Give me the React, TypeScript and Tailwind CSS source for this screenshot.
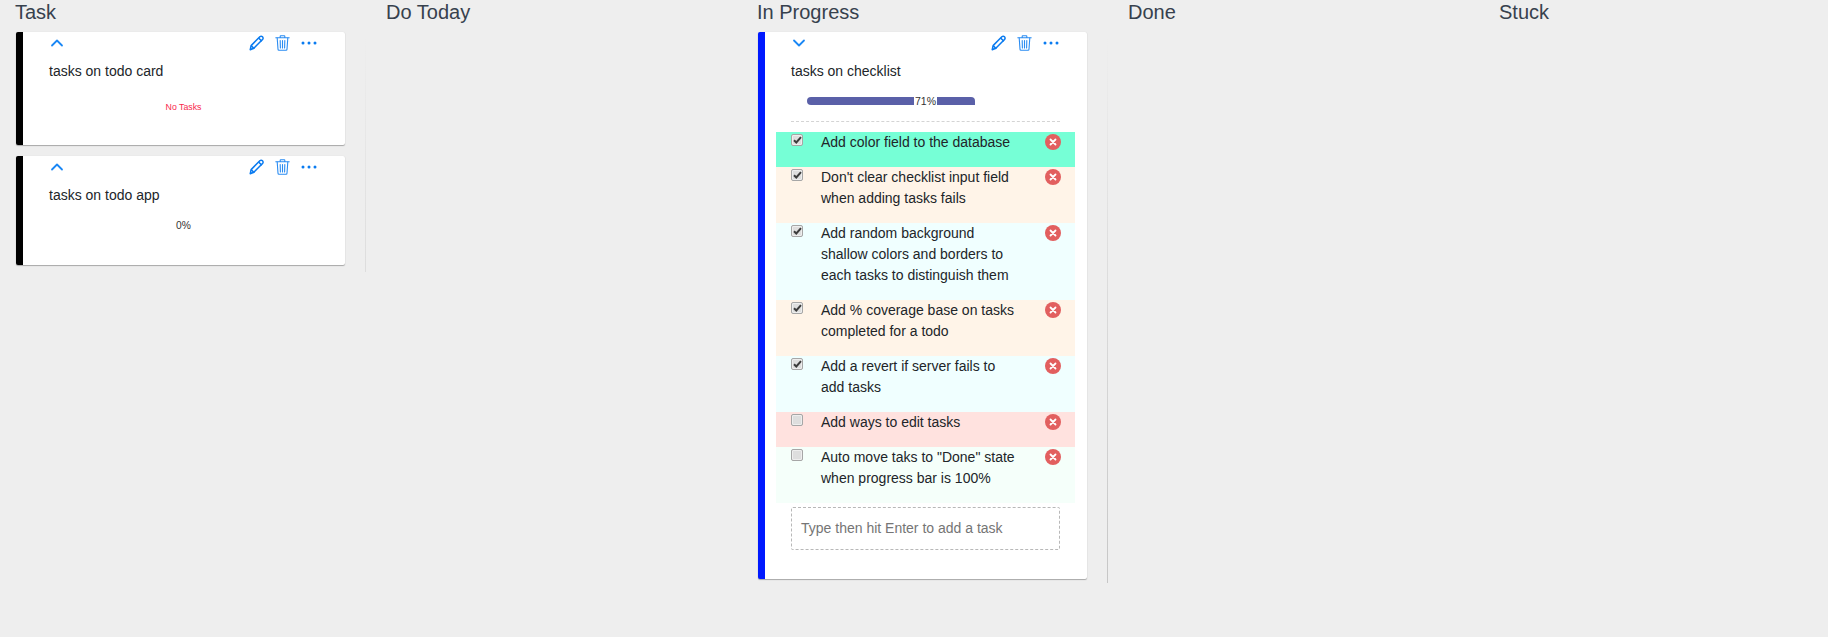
import type { ReactNode } from "react";

const Chevron = ({ down }: { down?: boolean }) => (
  <svg width="14" height="8" viewBox="0 0 14 8" fill="none" stroke="#1a87f5" strokeWidth="1.8" strokeLinecap="round" strokeLinejoin="round">
    <path d={down ? "M2 1.5l5 5 5-5" : "M2 6.5l5-5 5 5"} />
  </svg>
);

const Pencil = () => (
  <svg width="16" height="16" viewBox="0 0 16 16" fill="none" stroke="#0a7bf0" strokeWidth="1.5" strokeLinejoin="round">
    <path d="M1.2 14.8l.9-4.2 8.7-8.8c.8-.8 1.9-.8 2.7 0 .8.8.8 1.9 0 2.7l-8.7 8.8z" />
    <path d="M9.6 3l3.3 3.3M2.1 10.6l3.2 3.2" />
  </svg>
);

const Trash = () => (
  <svg width="15" height="16" viewBox="0 0 15 16" fill="none" stroke="#2a8cf2" strokeWidth="1.1" strokeLinecap="round">
    <path d="M.8 2.8h13.4M5.2 2.6V1.2c0-.3.2-.5.5-.5h3.6c.3 0 .5.2.5.5v1.4" />
    <path d="M2.2 3l.8 11.3c0 .6.5 1 1 1h7c.5 0 1-.4 1-1L12.800 3" />
    <path d="M5.2 5.500l.2 7.500M7.500 5.500V13M9.800 5.500l-.2 7.500" />
  </svg>
);

const Dots = () => (
  <svg width="16" height="4" viewBox="0 0 16 4" fill="#0a7bf0">
    <circle cx="2" cy="2" r="1.500" />
    <circle cx="8" cy="2" r="1.500" />
    <circle cx="14" cy="2" r="1.500" />
  </svg>
);

const CardHeader = ({ down }: { down?: boolean }) => (
  <div className="flex h-[22px] items-center justify-between pl-[27px] pr-[28px]">
    <Chevron down={down} />
    <div className="flex items-center">
      <Pencil />
      <span className="ml-[10px]">
        <Trash />
      </span>
      <span className="ml-[11px]">
        <Dots />
      </span>
    </div>
  </div>
);

const Checkbox = ({ checked }: { checked: boolean }) => (
  <span className="flex h-[12px] w-[12px] shrink-0 items-center justify-center rounded-[2px] border border-[#a6a6a6] bg-[#dedede] shadow-[inset_0_0_0_1px_#eeeeee]">
    {checked && (
      <svg width="9" height="8" viewBox="0 0 9 8" fill="none" stroke="#3c3c3c" strokeWidth="2">
        <path d="M1 4.200l2.300 2.300L8 1.200" />
      </svg>
    )}
  </span>
);

const tasks = [
  { text: ["Add color field to the database"], bg: "bg-[#76ffd6]", done: true },
  { text: ["Don't clear checklist input field", "when adding tasks fails"], bg: "bg-[#fff4e8]", done: true },
  { text: ["Add random background", "shallow colors and borders to", "each tasks to distinguish them"], bg: "bg-[#f0ffff]", done: true },
  { text: ["Add % coverage base on tasks", "completed for a todo"], bg: "bg-[#fff4e8]", done: true },
  { text: ["Add a revert if server fails to", "add tasks"], bg: "bg-[#f0ffff]", done: true },
  { text: ["Add ways to edit tasks"], bg: "bg-[#ffe2df]", done: false },
  { text: ['Auto move taks to "Done" state', "when progress bar is 100%"], bg: "bg-[#f5fffa]", done: false },
];

const TaskRow = ({ text, bg, done }: { text: string[]; bg: string; done: boolean }) => (
  <div className={`flex pb-[14px] pl-[15px] pr-[14px] ${bg}`}>
    <div className="w-[30px] pt-[2px]">
      <Checkbox checked={done} />
    </div>
    <div className="flex-1 text-[14px] leading-[21px] text-[#212529]">
      {text.map((line) => (
        <div key={line}>{line}</div>
      ))}
    </div>
    <div className="pt-[2px]">
      <span className="flex h-4 w-4 items-center justify-center rounded-full bg-[#e25f5f]">
        <svg width="8" height="8" viewBox="0 0 8 8" stroke="#fff" strokeWidth="1.800" strokeLinecap="round">
          <path d="M1.500 1.500l5 5M6.500 1.500l-5 5" />
        </svg>
      </span>
    </div>
  </div>
);

const Card = ({ color, height, children }: { color: string; height: string; children: ReactNode }) => (
  <div className={`w-[329px] overflow-hidden rounded-[2px] border-l-[7px] bg-white shadow-[0_1px_1px_#a8a8a8,0_0_1px_#d0d0d0] ${color} ${height}`}>
    {children}
  </div>
);

const ShortCard = ({ title, height, footer }: { title: string; height: string; footer: ReactNode }) => (
  <Card color="border-black" height={height}>
    <CardHeader />
    <div className="pl-[26px] pt-[7px] text-[14px] leading-[21px] text-[#212529]">{title}</div>
    {footer}
  </Card>
);

// the rule between columns fades in from the top of the board
const Rule = () => (
  <div className="w-px bg-[linear-gradient(#eeeeee,#c6c6c6)] bg-[length:1px_551px] bg-no-repeat" />
);

const Column = ({ title, children, ruled = true }: { title: string; children?: ReactNode; ruled?: boolean }) => (
  <div className="w-[371px] shrink-0">
    <h2 className="h-[32px] text-[20px] leading-[24px] text-[#37414d]">{title}</h2>
    <div className="flex w-[351px]">
      <div className="flex-1">{children}</div>
      {ruled && <Rule />}
    </div>
  </div>
);

export default function App() {
  return (
    <div className="flex h-[637px] overflow-hidden bg-[#eeeeee] pl-[15px] font-['Liberation_Sans',Arial,sans-serif]">
      <Column title="Task">
        <div className="flex flex-col gap-[11px] pb-[7px] pl-[1px]">
          <ShortCard
            title="tasks on todo card"
            height="h-[113px]"
            footer={<div className="pr-[1px] pt-[19px] text-center text-[8.75px] leading-[12px] text-[#f8284c]">No Tasks</div>}
          />
          <ShortCard
            title="tasks on todo app"
            height="h-[109px]"
            footer={<div className="pr-[1px] pt-[14px] text-center text-[10.25px] leading-[12px] text-[#333]">0%</div>}
          />
        </div>
      </Column>
      <Column title="Do Today" ruled={false} />
      <Column title="In Progress">
        <div className="pb-[4px] pl-[1px]">
          <Card color="border-[#0019ff]" height="h-[547px]">
            <CardHeader down />
            <div className="pl-[26px] pt-[7px] text-[14px] leading-[21px] text-[#212529]">tasks on checklist</div>
            <div className="ml-[42px] mt-[15px] flex h-[8px] w-[168px] items-center">
              <div className="h-full w-[107px] rounded-l-[4px] bg-[#5a60a8]" />
              <span className="w-[23px] bg-white text-center text-[10.5px] leading-[12px] text-[#333]">71%</span>
              <div className="h-full flex-1 rounded-tr-[4px] bg-[#5a60a8]" />
            </div>
            <div className="ml-[26px] mr-[27px] mt-[16px] border-t border-dashed border-[#d4d4d4]" />
            <div className="ml-[11px] mr-[12px] mt-[10px]">
              {tasks.map((task) => (
                <TaskRow key={task.text[0]} {...task} />
              ))}
            </div>
            <div className="ml-[26px] mr-[27px] mt-[4px] flex h-[43px] items-center rounded-[2px] border border-dashed border-[#b8b8b8] px-[9px] text-[14px] text-[#757575]">
              Type then hit Enter to add a task
            </div>
          </Card>
        </div>
      </Column>
      <Column title="Done" ruled={false} />
      <Column title="Stuck" ruled={false} />
    </div>
  );
}
